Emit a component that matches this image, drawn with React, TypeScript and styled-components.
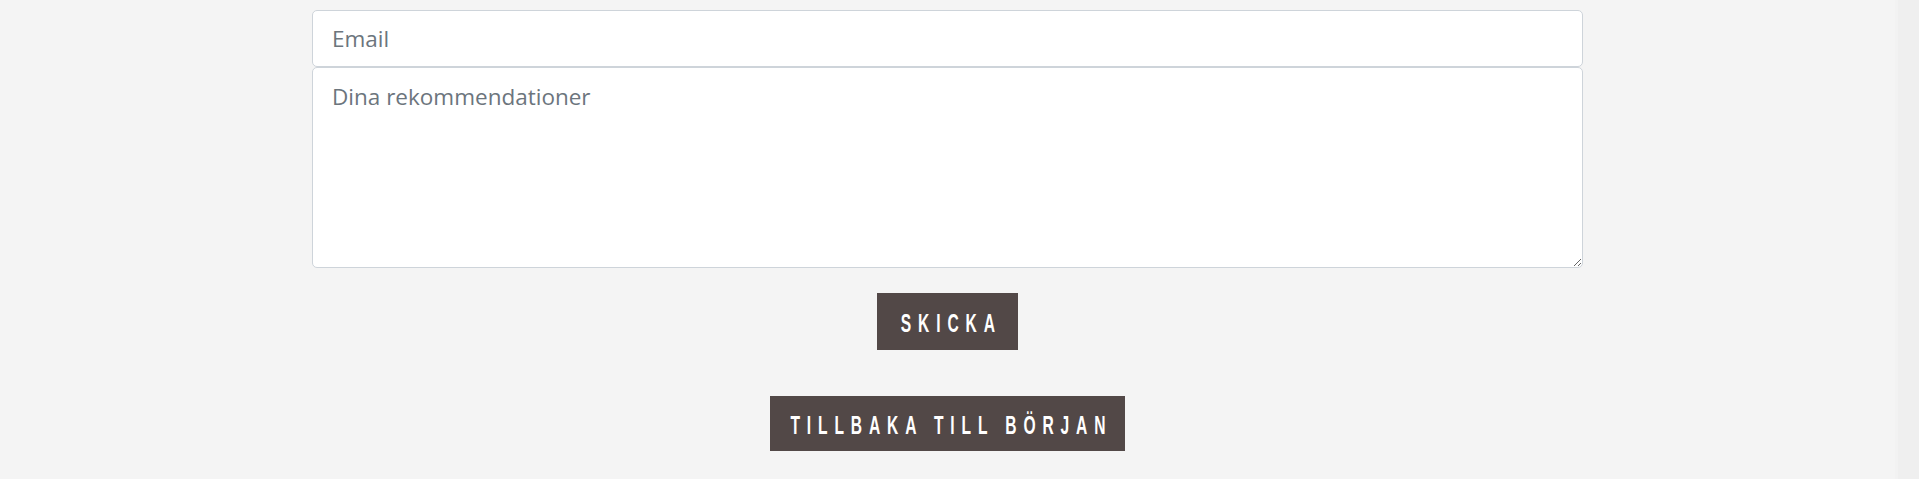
import React from 'react';
import styled, { createGlobalStyle } from 'styled-components';

const GlobalStyle = createGlobalStyle`
  html, body {
    margin: 0;
    padding: 0;
    background-color: #f4f4f4;
    height: 100%;
    overflow: hidden;
  }
  #root {
    height: 100%;
  }
`;

const Page = styled.div`
  display: flex;
  flex-direction: row;
  width: 100%;
  height: 479px;
`;

const Main = styled.main`
  flex: 1;
  display: flex;
  flex-direction: column;
  align-items: center;
  padding-top: 10px;
`;

const ScrollTrack = styled.div`
  width: 24px;
  background-color: #efefef;
  border-left: 3px solid #f2f2f2;
  box-sizing: border-box;
`;

const Form = styled.form`
  display: flex;
  flex-direction: column;
  align-items: center;
  width: 1271px;
`;

const TextInput = styled.input`
  width: 100%;
  height: 57px;
  box-sizing: border-box;
  padding: 0 19px;
  font-family: 'Open Sans', 'Noto Sans', sans-serif;
  font-size: 22.5px;
  color: #495057;
  background-color: white;
  border: 1px solid #ced4da;
  border-radius: 5px;
  outline: none;

  &::placeholder {
    color: #6c757d;
  }
`;

const TextArea = styled.textarea`
  width: 100%;
  height: 201px;
  box-sizing: border-box;
  padding: 12px 19px;
  font-family: 'Open Sans', 'Noto Sans', sans-serif;
  font-size: 22.5px;
  line-height: 1.5;
  color: #495057;
  background-color: white;
  border: 1px solid #ced4da;
  border-radius: 5px;
  outline: none;
  resize: vertical;

  &::placeholder {
    color: #6c757d;
  }
`;

const DarkButton = styled.button<{ $top: string; $width: string; $height: string }>`
  margin-top: ${(p) => p.$top};
  width: ${(p) => p.$width};
  height: ${(p) => p.$height};
  padding: 3px 0 0;
  display: flex;
  align-items: center;
  justify-content: center;
  overflow: visible;
  background-color: #524847;
  color: #ffffff;
  border: none;
  border-radius: 0;
  cursor: pointer;
`;

// condensed display lettering, squeezed from a regular sans
const ButtonLabel = styled.span`
  display: inline-block;
  flex-shrink: 0;
  white-space: nowrap;
  font-family: 'Liberation Sans', Arial, sans-serif;
  font-size: 26px;
  font-weight: 700;
  letter-spacing: 0.44em;
  padding-left: 0.44em;
  text-transform: uppercase;
  transform: scaleX(0.6);
  transform-origin: center;
`;

export default function App() {
  return (
    <>
      <GlobalStyle />
      <Page>
        <Main>
          <Form onSubmit={(e) => e.preventDefault()}>
            <TextInput type="email" placeholder="Email" />
            <TextArea placeholder="Dina rekommendationer" />
            <DarkButton type="submit" $top="25px" $width="141px" $height="57px">
              <ButtonLabel>Skicka</ButtonLabel>
            </DarkButton>
          </Form>
          <DarkButton type="button" $top="46px" $width="355px" $height="55px">
            <ButtonLabel>Tillbaka till början</ButtonLabel>
          </DarkButton>
        </Main>
        <ScrollTrack />
      </Page>
    </>
  );
}
